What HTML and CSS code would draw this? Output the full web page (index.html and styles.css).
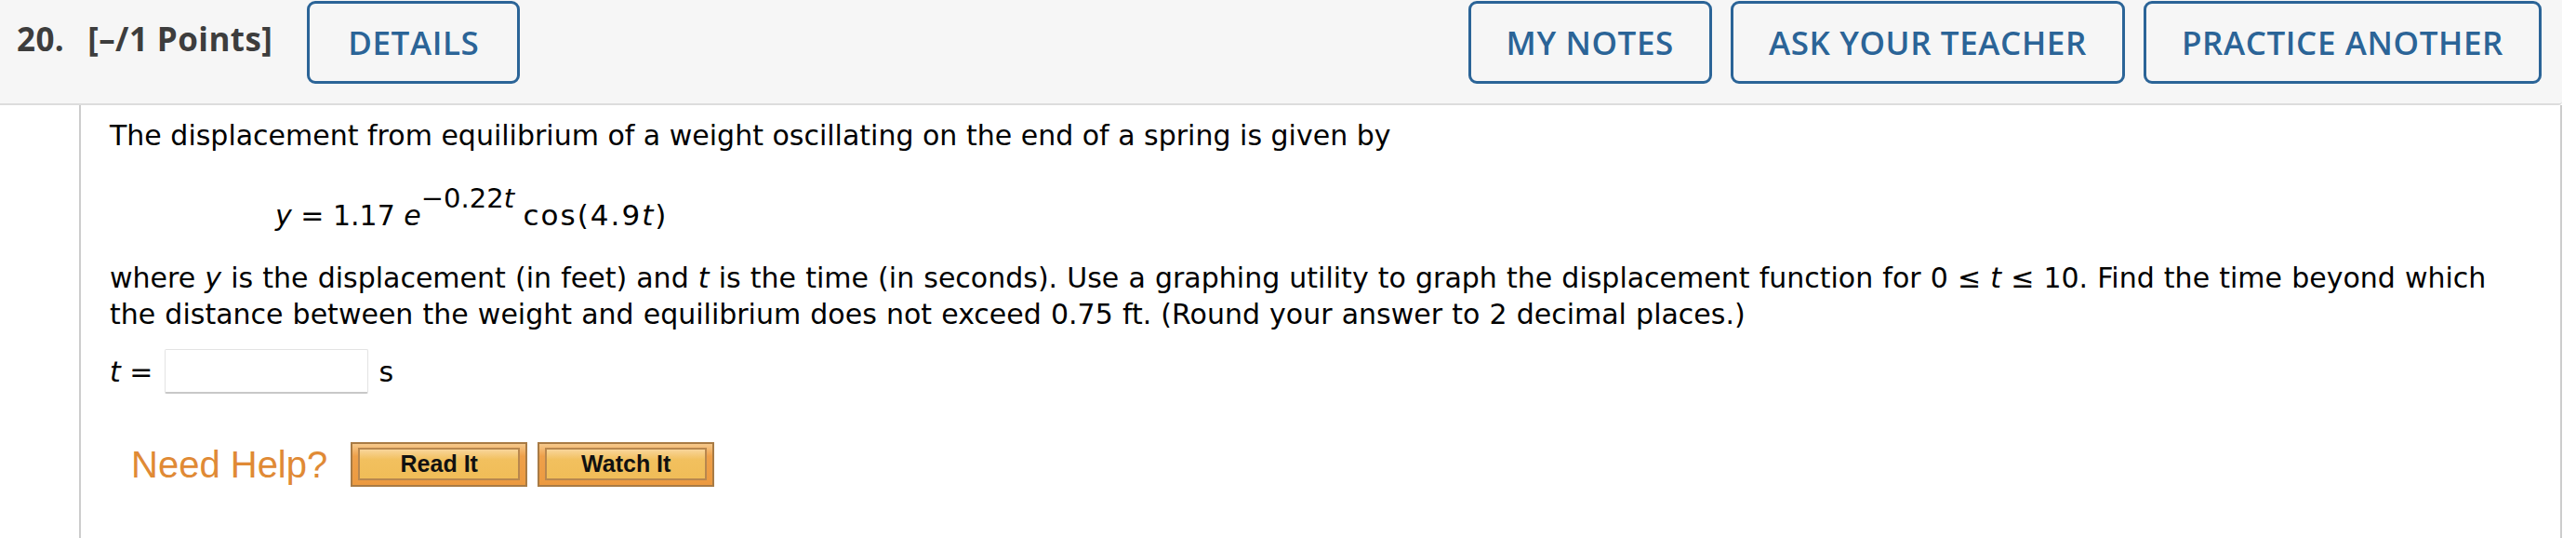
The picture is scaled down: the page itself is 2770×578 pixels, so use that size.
FILE: index.html
```html
<!DOCTYPE html>
<html>
<head>
<meta charset="utf-8">
<link rel="stylesheet" href="styles.css">
</head>
<body>
<div class="page">
  <div class="header">
    <div class="title"><span class="qnum">20.</span><span class="points">[–/1 Points]</span></div>
    <button class="hbtn details">DETAILS</button>
    <div class="hright">
      <button class="hbtn">MY NOTES</button>
      <button class="hbtn">ASK YOUR TEACHER</button>
      <button class="hbtn">PRACTICE ANOTHER</button>
    </div>
  </div>
  <div class="content">
    <p class="para">The displacement from equilibrium of a weight oscillating on the end of a spring is given by</p>
    <p class="formula"><i>y</i> = 1.17 <i>e</i><span class="sup">−0.22<i>t</i></span> <span class="fn">cos(4.9<i>t</i>)</span></p>
    <p class="para wide">where <i>y</i> is the displacement (in feet) and <i>t</i> is the time (in seconds). Use a graphing utility to graph the displacement function for 0 ≤ <i>t</i> ≤ 10. Find the time beyond which<br>the distance between the weight and equilibrium does not exceed 0.75 ft. (Round your answer to 2 decimal places.)</p>
    <div class="answer"><span class="lbl"><i>t</i> =</span><span class="inputbox"></span><span class="unit">s</span></div>
    <div class="help">
      <span class="needhelp">Need Help?</span>
      <span class="hb"><span class="hbi">Read It</span></span>
      <span class="hb"><span class="hbi">Watch It</span></span>
    </div>
  </div>
</div>
</body>
</html>
```

FILE: styles.css
```css
html, body {
  margin: 0;
  padding: 0;
  background: #ffffff;
}
.page {
  width: 2755px;
  font-family: "DejaVu Sans", Verdana, sans-serif;
}
.header {
  display: flex;
  align-items: flex-start;
  box-sizing: border-box;
  height: 113px;
  padding: 1px 22px 0 18px;
  background: #f6f6f6;
  border-bottom: 2px solid #dddddd;
  border-bottom-right-radius: 4px;
}
.title {
  margin-top: 17px;
  font-family: "Open Sans", sans-serif;
  font-weight: 700;
  font-size: 35px;
  letter-spacing: 0.4px;
  color: #3d3d3d;
  display: flex;
  gap: 25px;
  white-space: nowrap;
}
.hbtn {
  height: 89px;
  box-sizing: border-box;
  border: 3px solid #2b6497;
  border-radius: 9px;
  background: transparent;
  padding: 0 38px;
  font-family: "Open Sans", sans-serif;
  font-weight: 600;
  font-size: 35px;
  letter-spacing: 0.6px;
  color: #2b6497;
  white-space: nowrap;
}
.details {
  margin-left: 37px;
  padding: 0 41px;
}
.hright {
  margin-left: auto;
  display: flex;
  gap: 20px;
}
.content {
  margin-left: 85px;
  border-left: 2px solid #cccccc;
  border-right: 2px solid #cccccc;
  height: 465px;
  box-sizing: border-box;
  padding: 13px 30px 0 31px;
  font-size: 30px;
  line-height: 39px;
  color: #000000;
}
.para, .formula {
  margin: 0;
}
.wide {
  word-spacing: 0.6px;
}
.formula {
  margin-top: 47px;
  margin-bottom: 28px;
  padding-left: 178px;
}
.sup {
  font-size: 29px;
  vertical-align: 19px;
  line-height: 0;
}
.fn {
  font-size: 31px;
  letter-spacing: 2px;
}
.answer {
  display: flex;
  align-items: center;
  margin-top: 18px;
  height: 48px;
}
.lbl {
  margin-right: 13px;
}
.inputbox {
  width: 219px;
  height: 48px;
  box-sizing: border-box;
  border: 1px solid #e3e3e3;
  border-bottom: 2px solid #c8c8c8;
  border-radius: 2px;
  background: #ffffff;
}
.unit {
  margin-left: 11px;
}
.help {
  display: flex;
  align-items: center;
  margin-top: 52px;
  height: 48px;
  padding-left: 23px;
  gap: 11px;
}
.needhelp {
  font-family: "Liberation Sans", Arial, sans-serif;
  font-size: 40px;
  color: #e08a35;
  margin-right: 14px;
  line-height: 48px;
}
.hb {
  display: flex;
  width: 190px;
  height: 48px;
  box-sizing: border-box;
  border: 2px solid #a87b45;
  background: linear-gradient(#f6c98c, #eea04a 30%, #ec9a40);
  padding: 4px 6px 5px 6px;
}
.hbi {
  flex: 1;
  display: flex;
  align-items: center;
  justify-content: center;
  border: 2px solid #b8874e;
  background: linear-gradient(#f8d59a, #f2c05e 35%, #f0bd58);
  font-family: "Liberation Sans", Arial, sans-serif;
  font-weight: 700;
  font-size: 25px;
  color: #111111;
}
```
